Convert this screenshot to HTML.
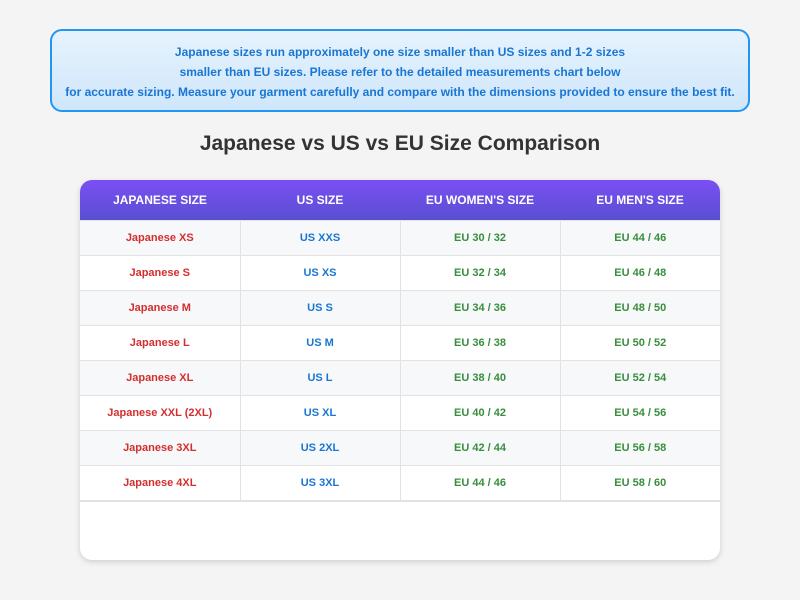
<!DOCTYPE html>
<html><head><style>
body{margin:0;width:800px;height:600px;background:#f4f4f4;font-family:"Liberation Sans",sans-serif;overflow:hidden}
.note{position:absolute;left:50px;top:29px;width:696px;height:78px;border:2px solid #2196f3;border-radius:12px;background:linear-gradient(180deg,#e6f3fd,#cfe6fb);color:#1976d2;font-weight:bold;font-size:12px;line-height:20px;text-align:center;padding-top:1px;box-sizing:content-box}
.note div{padding-top:10px}
h1{position:absolute;top:132px;left:0;width:800px;margin:0;text-align:center;font-size:21px;color:#333;font-weight:bold}
.card{position:absolute;left:80px;top:180px;width:640px;height:380px;background:#fff;border-radius:12px;box-shadow:0 2px 6px rgba(0,0,0,.15);overflow:hidden}
table{border-collapse:collapse;width:640px;table-layout:fixed}
th{height:40px;background:linear-gradient(180deg,#7a4ff5,#5a4fd0);color:#fff;font-size:12px;font-weight:bold;padding:0}
td{height:34px;border:1px solid #e2e2e2;font-size:11px;font-weight:bold;text-align:center;padding:0}
tr:nth-child(odd) td{background:#f7f8fa}
tr:last-child td{border-bottom:2px solid #e2e2e2}
td:first-child{border-left:none;color:#d32f2f}td:nth-child(2){color:#1976d2}td:nth-child(3),td:nth-child(4){color:#388e3c}td:last-child{border-right:none}
</style></head><body>
<div class="note"><div>Japanese sizes run approximately one size smaller than US sizes and 1-2 sizes<br>smaller than EU sizes. Please refer to the detailed measurements chart below<br>for accurate sizing. Measure your garment carefully and compare with the dimensions provided to ensure the best fit.</div></div>
<h1>Japanese vs US vs EU Size Comparison</h1>
<div class="card"><table>
<thead><tr><th>JAPANESE SIZE</th><th>US SIZE</th><th>EU WOMEN'S SIZE</th><th>EU MEN'S SIZE</th></tr></thead>
<tbody>
<tr><td>Japanese XS</td><td>US XXS</td><td>EU 30 / 32</td><td>EU 44 / 46</td></tr>
<tr><td>Japanese S</td><td>US XS</td><td>EU 32 / 34</td><td>EU 46 / 48</td></tr>
<tr><td>Japanese M</td><td>US S</td><td>EU 34 / 36</td><td>EU 48 / 50</td></tr>
<tr><td>Japanese L</td><td>US M</td><td>EU 36 / 38</td><td>EU 50 / 52</td></tr>
<tr><td>Japanese XL</td><td>US L</td><td>EU 38 / 40</td><td>EU 52 / 54</td></tr>
<tr><td>Japanese XXL (2XL)</td><td>US XL</td><td>EU 40 / 42</td><td>EU 54 / 56</td></tr>
<tr><td>Japanese 3XL</td><td>US 2XL</td><td>EU 42 / 44</td><td>EU 56 / 58</td></tr>
<tr><td>Japanese 4XL</td><td>US 3XL</td><td>EU 44 / 46</td><td>EU 58 / 60</td></tr>
</tbody></table></div>
</body></html>
